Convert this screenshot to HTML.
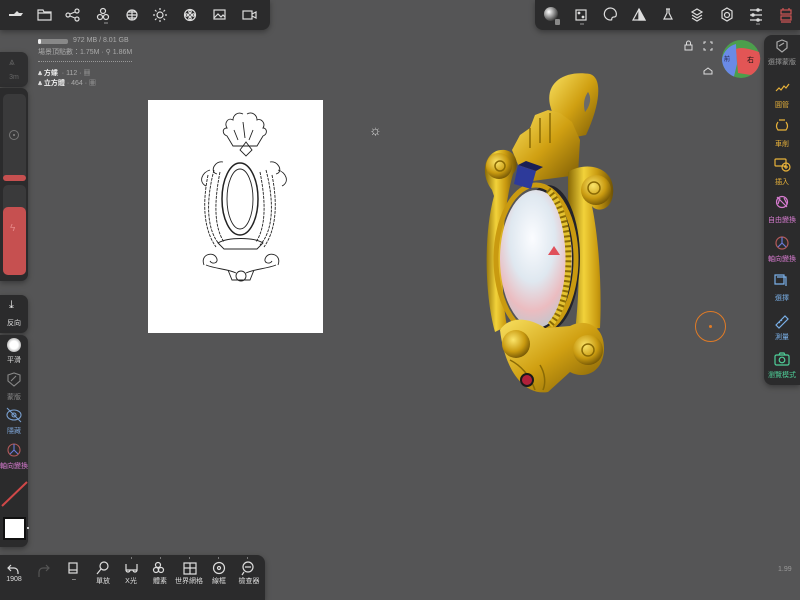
<!DOCTYPE html>
<html><head><meta charset="utf-8"><style>
*{margin:0;padding:0;box-sizing:border-box}
body{width:800px;height:600px;overflow:hidden;background:#555556;font-family:"Liberation Sans","Noto Sans CJK TC",sans-serif;position:relative;color:#ccc}
.p{position:absolute;background:#2b2b2c;box-shadow:0 2px 6px rgba(0,0,0,.35)}
.lbl{position:absolute;font-size:7px;transform:translateX(-50%);white-space:nowrap}
svg{overflow:visible}
</style></head><body>

<!-- top-left toolbar -->
<div class="p" style="left:0;top:0;width:270px;height:30px;border-radius:0 0 8px 0"></div>
<svg style="position:absolute;left:0;top:0" width="270" height="30" fill="none" stroke="#ddd" stroke-width="1.2">
<path d="M9 16h12l2-3h-4l-2-2-3 3h-5z" fill="#ddd" stroke="none"/>
<path d="M38 10h5l1 2h7v8H38z"/><path d="M38 13h13"/>
<circle cx="68" cy="15" r="2"/><circle cx="77" cy="11" r="2"/><circle cx="77" cy="19" r="2"/><path d="M70 14l5-2M70 16l5 2"/>
<circle cx="103" cy="11" r="2.5"/><circle cx="100" cy="17" r="2.5"/><circle cx="106" cy="17" r="2.5"/><path d="M104 23h4" stroke="#888"/>
<circle cx="132" cy="15" r="5"/><path d="M127 15h10M132 10v10M128 12h8M128 18h8"/>
<circle cx="160" cy="15" r="3"/><path d="M160 8v2M160 20v2M153 15h2M165 15h2M155 10l1.5 1.5M165 10l-1.5 1.5M155 20l1.5-1.5M165 20l-1.5-1.5"/>
<circle cx="190" cy="15" r="5.5"/><circle cx="190" cy="15" r="1.5"/><circle cx="190" cy="11.5" r="1.2"/><circle cx="190" cy="18.5" r="1.2"/><circle cx="186.5" cy="15" r="1.2"/><circle cx="193.5" cy="15" r="1.2"/>
<rect x="214" y="10" width="11" height="9"/><path d="M214 18l4-4 3 3 2-2 2 2"/>
<rect x="243" y="11" width="9" height="8"/><path d="M252 14l4-2v6l-4-2"/>
</svg>

<!-- info text -->
<div style="position:absolute;left:38px;top:39px;width:30px;height:5px;background:#888;border-radius:2px"></div>
<div style="position:absolute;left:38px;top:39px;width:3px;height:5px;background:#eee;border-radius:2px"></div>
<div style="position:absolute;left:73px;top:37px;font-size:7px;color:#aaa">972 MB / 8.01 GB</div>
<div style="position:absolute;left:38px;top:47px;font-size:7px;color:#aaa">場景頂點數：1.75M · ⚲ 1.86M</div>
<div style="position:absolute;left:38px;top:61px;width:94px;border-top:1px dotted #999"></div>
<div style="position:absolute;left:38px;top:68px;font-size:7px;color:#ccc"><b style="color:#eee">⩓ 方蝶</b> <span style="color:#aaa">&nbsp;· 112 · ▦</span></div>
<div style="position:absolute;left:38px;top:78px;font-size:7px;color:#ccc"><b style="color:#eee">⩓ 立方體</b> <span style="color:#aaa">· 464 · ▦</span></div>

<!-- top-right toolbar -->
<div class="p" style="left:535px;top:0;width:265px;height:30px;border-radius:0 0 0 8px"></div>
<svg style="position:absolute;left:530px;top:0" width="270" height="30" fill="none" stroke="#ddd" stroke-width="1.2">
<defs><radialGradient id="sph" cx=".35" cy=".35" r=".7"><stop offset="0" stop-color="#fff"/><stop offset=".5" stop-color="#999"/><stop offset="1" stop-color="#333"/></radialGradient></defs>
<circle cx="21" cy="14" r="7" fill="url(#sph)" stroke="none"/><rect x="25" y="19" width="5" height="6" rx="1" fill="#888" stroke="none"/>
<rect x="46" y="10" width="10" height="10"/><circle cx="49" cy="13" r=".8" fill="#ddd"/><circle cx="53" cy="17" r=".8" fill="#ddd"/><path d="M50 24h4" stroke="#888"/>
<path d="M80 20a6 6 0 1 1 6-4c-1 2-3 0-4 2s1 2-2 2z"/>
<path d="M103 20l6-11 6 11z"/><path d="M109 9v11" /><path d="M109 9l6 11h-6z" fill="#ddd"/>
<path d="M136 9h4M137 9v4l-3 6h8l-3-6V9"/>
<path d="M167 9l5 3-5 3-5-3zM162 15l5 3 5-3M162 18l5 3 5-3"/>
<circle cx="197" cy="15" r="2.5"/><path d="M197 8l5 3v7l-5 3-5-3v-7z"/>
<path d="M220 10h12M220 15h12M220 20h12"/><circle cx="228" cy="10" r="1.2" fill="#ddd"/><circle cx="223" cy="15" r="1.2" fill="#ddd"/><circle cx="228" cy="20" r="1.2" fill="#ddd"/><path d="M226 24h4" stroke="#888"/>
<g stroke="#d05555"><rect x="251" y="10" width="10" height="4"/><rect x="251" y="16" width="10" height="4"/><path d="M251 22h10M253 8v2M259 8v2"/></g>
</svg>

<!-- lock / expand / home -->
<svg style="position:absolute;left:680px;top:38px" width="40" height="40" fill="none" stroke="#ddd" stroke-width="1">
<rect x="5" y="7" width="7" height="5"/><path d="M6.5 7V5a2 2 0 0 1 4 0v2"/>
<path d="M24 6V4h2M30 4h2v2M24 10v2h2M30 12h2v-2"/>
<path d="M24 33l4-3 4 3v3h-8z"/>
</svg>
<!-- gizmo cube -->
<svg style="position:absolute;left:721px;top:39px" width="40" height="40">
<circle cx="20" cy="20" r="19" fill="#4c9e4c"/>
<path d="M1 20a19 19 0 0 0 12 17.5L16 25 15 5A19 19 0 0 0 1 20z" fill="#6a8ae6"/>
<path d="M15 10q6-3 23 3a19 19 0 0 1-8 23l-13-2z" fill="#e25555"/>
<text x="26" y="23" font-size="7" fill="#111" font-family="Noto Sans CJK TC">右</text>
<text x="3" y="22" font-size="6" fill="#224">前</text>
</svg>

<!-- right panel -->
<div class="p" style="left:764px;top:35px;width:36px;height:350px;border-radius:8px 0 0 8px"></div>
<svg style="position:absolute;left:764px;top:35px" width="36" height="350" fill="none" stroke-width="1.2">
<path d="M13 7l5-2 5 2v6l-5 4-5-4z" stroke="#aaa"/><path d="M15 11l5-3" stroke="#aaa"/>
<path d="M12 56l3-3 2 2 3-4 2 2 3-4" stroke="#e8b23a"/>
<path d="M15 85h6M14 87q-3 4 0 8h8q3-4 0-8" stroke="#e8b23a"/>
<rect x="11" y="124" width="11" height="7" rx="1" stroke="#e8b23a"/><circle cx="22" cy="132" r="4" stroke="#e8b23a"/><path d="M22 130v4M20 132h4" stroke="#e8b23a"/>
<circle cx="18" cy="167" r="5.5" stroke="#d77bd0"/><path d="M13 162l10 10M16 163l-2 6M20 163l3 6" stroke="#d77bd0"/>
<circle cx="18" cy="208" r="6" stroke="#b45a5a"/><path d="M18 202v6l-4 4M18 208l4 4" stroke="#6a7ad8"/>
<path d="M11 240h9v9h-9zM13 242h9v9" stroke="#7ab0e8"/>
<path d="M12 290l9-9 3 3-9 9zM15 287l1 1M17 285l1 1" stroke="#7ab0e8"/>
<rect x="11" y="320" width="14" height="10" rx="1.5" stroke="#4fcf99"/><circle cx="18" cy="325" r="2.8" stroke="#4fcf99"/><path d="M15 320l1-2h4l1 2" stroke="#4fcf99"/>
</svg>
<div class="lbl" style="left:782px;top:57px;color:#999">選擇蒙版</div>
<div class="lbl" style="left:782px;top:100px;color:#e8b23a">圓管</div>
<div class="lbl" style="left:782px;top:139px;color:#e8b23a">車削</div>
<div class="lbl" style="left:782px;top:177px;color:#e8b23a">插入</div>
<div class="lbl" style="left:782px;top:215px;color:#d77bd0">自由變換</div>
<div class="lbl" style="left:782px;top:254px;color:#d77bd0">軸向變換</div>
<div class="lbl" style="left:782px;top:293px;color:#7ab0e8">選擇</div>
<div class="lbl" style="left:782px;top:332px;color:#7ab0e8">測量</div>
<div class="lbl" style="left:782px;top:370px;color:#4fcf99">瀏覽模式</div>

<!-- left panels -->
<div class="p" style="left:0;top:52px;width:28px;height:35px;border-radius:0 7px 7px 0;background:#2f2f30"></div>
<div style="position:absolute;left:9px;top:57px;font-size:10px;color:#666">⩓</div>
<div class="lbl" style="left:14px;top:74px;color:#666">3m</div>
<div class="p" style="left:0;top:88px;width:28px;height:193px;border-radius:0 7px 7px 0"></div>
<div style="position:absolute;left:3px;top:94px;width:23px;height:86px;background:#3a3a3b;border-radius:5px"></div>
<div style="position:absolute;left:3px;top:175px;width:23px;height:6px;background:#c65050;border-radius:3px"></div>
<div style="position:absolute;left:9px;top:130px;width:10px;height:10px;border:1px solid #777;border-radius:50%"></div>
<div style="position:absolute;left:13px;top:134px;width:2px;height:2px;background:#888;border-radius:50%"></div>
<div style="position:absolute;left:3px;top:185px;width:23px;height:90px;background:#3a3a3b;border-radius:5px"></div>
<div style="position:absolute;left:3px;top:207px;width:23px;height:68px;background:#c65050;border-radius:5px"></div>
<div style="position:absolute;left:10px;top:223px;font-size:10px;color:#e58888">ϟ</div>

<div class="p" style="left:0;top:295px;width:28px;height:38px;border-radius:0 7px 7px 0"></div>
<div style="position:absolute;left:9px;top:299px;font-size:11px;color:#eee">⤓</div>
<div class="lbl" style="left:14px;top:318px;color:#ddd">反向</div>
<div class="p" style="left:0;top:335px;width:28px;height:212px;border-radius:0 7px 7px 0"></div>
<div style="position:absolute;left:7px;top:338px;width:14px;height:14px;border-radius:50%;background:radial-gradient(#fff 40%,#bbb 70%,#777)"></div>
<div class="lbl" style="left:14px;top:355px;color:#ddd">平滑</div>
<svg style="position:absolute;left:0;top:370px" width="28" height="90" fill="none" stroke-width="1.1">
<path d="M8 5l6-2 6 2v6l-6 5-6-5z" stroke="#888"/><path d="M11 11l5-5" stroke="#888"/>
<ellipse cx="14" cy="45" rx="7" ry="5" stroke="#7aa0d0"/><circle cx="14" cy="45" r="2" stroke="#7aa0d0"/><path d="M7 38l14 14" stroke="#7aa0d0"/>
<circle cx="14" cy="80" r="6" stroke="#b45a5a"/><path d="M14 74v6l-4 4M14 80l4 4" stroke="#6a7ad8"/>
</svg>
<div class="lbl" style="left:14px;top:392px;color:#888">蒙版</div>
<div class="lbl" style="left:14px;top:426px;color:#7aa0d0">隱藏</div>
<div class="lbl" style="left:14px;top:461px;color:#d77bd0">軸向變換</div>
<svg style="position:absolute;left:0;top:478px" width="30" height="30"><path d="M2 28L27 4" stroke="#d04848" stroke-width="2"/></svg>
<div style="position:absolute;left:3px;top:517px;width:23px;height:23px;background:#fff;border:2px solid #111"></div>
<div style="position:absolute;left:27px;top:527px;width:2px;height:2px;background:#ccc"></div>

<!-- bottom bar -->
<div class="p" style="left:0;top:555px;width:265px;height:45px;border-radius:0 8px 0 0"></div>
<svg style="position:absolute;left:0;top:555px" width="265" height="45" fill="none" stroke="#ddd" stroke-width="1.2">
<path d="M11 10l-3 3 3 3M8 13h6a4 4 0 0 1 4 4v2"/>
<path d="M46 10l3 3-3 3M49 13h-6a4 4 0 0 0-4 4v5" stroke="#555"/>
<rect x="69" y="8" width="8" height="10"/><path d="M69 15h8" />
<circle cx="104" cy="11" r="4"/><path d="M101 14l-4 5"/>
<path d="M126 9v6h11V9M126 15a2 2 0 0 0 4 0M133 15a2 2 0 0 0 4 0"/>
<circle cx="158" cy="10" r="2.5"/><circle cx="156" cy="15" r="2.5"/><circle cx="161" cy="15" r="2.5"/>
<path d="M184 8h12v11h-12zM184 13h12M190 8v11"/>
<circle cx="219" cy="13" r="5.5"/><circle cx="219" cy="13" r="1.5"/>
<circle cx="248" cy="12" r="5"/><path d="M245 12h6M244 17l-2 3"/>
<g stroke="#aaa"><path d="M131 3h1M160 3h1M189 3h1M218 3h1M247 3h1"/></g>
</svg>
<div class="lbl" style="left:14px;top:576px;color:#ddd">1908</div>
<div class="lbl" style="left:74px;top:576px;color:#ddd">–</div>
<div class="lbl" style="left:103px;top:576px;color:#ddd">單放</div>
<div class="lbl" style="left:131px;top:576px;color:#ddd">X光</div>
<div class="lbl" style="left:160px;top:576px;color:#ddd">體素</div>
<div class="lbl" style="left:189px;top:576px;color:#ddd">世界網格</div>
<div class="lbl" style="left:219px;top:576px;color:#ddd">線框</div>
<div class="lbl" style="left:249px;top:576px;color:#ddd">檢查器</div>
<div style="position:absolute;left:778px;top:566px;font-size:7px;color:#999">1.99</div>

<!-- reference image -->
<div style="position:absolute;left:148px;top:100px;width:175px;height:233px;background:#fff"></div>
<svg style="position:absolute;left:148px;top:100px" width="175" height="233" fill="none" stroke="#222" stroke-width="0.9">
<path d="M95 14c-6-3-10 2-10 6-5-3-9 3-6 8-5 0-5 6 0 8l6 10h24l6-10c5-2 4-8 0-8 3-5-2-10-6-8 0-5-5-9-10-6"/>
<path d="M86 30l4 10M95 22l2 16M105 30l-4 10M92 50l6-8 6 8-6 6z"/>
<path d="M75 62c-8-2-14 10-6 12M122 62c8-2 14 10 6 12M62 70c-8 2-12 12-4 16M130 70c8 2 12 12 4 16"/>
<ellipse cx="92" cy="99" rx="18" ry="36" stroke-width="1.5"/><ellipse cx="92" cy="99" rx="13" ry="30"/>
<path d="M66 70c-8 30-8 60 6 75M60 75c-6 30-4 55 8 72M118 70c8 30 8 60-6 75M124 75c6 30 4 55-8 72M72 72c-6 30-6 55 4 70M112 72c6 30 6 55-4 70" stroke-dasharray="3 1"/>
<path d="M70 143c10-6 36-6 45 0l-6 6h-33z"/>
<path d="M56 165c-4-10 8-14 12-8s-4 8-6 4M130 165c4-10-8-14-12-8s4 8 6 4"/>
<path d="M58 165c10 4 22 4 30 8M128 165c-10 4-22 4-30 8M80 170l4 10h18l4-10"/>
<circle cx="93" cy="176" r="5"/>
</svg>

<!-- light icon -->
<div style="position:absolute;left:369px;top:122px;font-size:14px;color:#ddd">☼</div>
<!-- orange circle -->
<div style="position:absolute;left:695px;top:311px;width:31px;height:31px;border:1.5px solid #e07b26;border-radius:50%"></div>
<div style="position:absolute;left:709px;top:325px;width:3px;height:3px;background:#e07b26;border-radius:50%"></div>

<!-- pendant -->
<svg style="position:absolute;left:470px;top:60px" width="170" height="340" viewBox="470 60 170 340">
<defs>
<linearGradient id="g" x1="0" y1="0" x2="1" y2="0"><stop offset="0" stop-color="#8a6a05"/><stop offset=".35" stop-color="#f2d23a"/><stop offset=".65" stop-color="#c99a10"/><stop offset="1" stop-color="#6e5205"/></linearGradient>
<linearGradient id="g2" x1="0" y1="0" x2="1" y2="1"><stop offset="0" stop-color="#f8e060"/><stop offset=".5" stop-color="#d0a012"/><stop offset="1" stop-color="#7a5a05"/></linearGradient>
<radialGradient id="sc" cx=".4" cy=".35" r=".7"><stop offset="0" stop-color="#fbe56a"/><stop offset=".6" stop-color="#c99a10"/><stop offset="1" stop-color="#6e5205"/></radialGradient>
<radialGradient id="op" cx=".45" cy=".35" r=".7"><stop offset="0" stop-color="#fbfcff"/><stop offset=".45" stop-color="#dfe8f0"/><stop offset=".75" stop-color="#ebbcc0"/><stop offset="1" stop-color="#b9c8d0"/></radialGradient>
</defs>
<!-- bail -->
<path d="M550 105C545 82 565 70 590 74C603 78 600 105 586 135L560 140Z" fill="url(#g2)"/>
<path d="M588 92c4 6 2 14-3 20-2-8-1-14 3-20z" fill="#6a6a6a"/>
<!-- crown -->
<path d="M512 150L520 135 530 128 535 115 548 110 560 113 572 122 580 140 578 175 525 182Z" fill="url(#g2)"/>
<path d="M530 128v20M540 118v25M550 113v30" stroke="#8a6a05" stroke-width="1.5"/>
<!-- right band -->
<path d="M568 172C588 160 616 168 613 194C611 212 596 212 592 206C599 240 602 290 600 328L575 332C581 280 580 230 568 200Z" fill="url(#g)"/>
<circle cx="596" cy="190" r="15" fill="url(#sc)"/><circle cx="594" cy="188" r="6" fill="none" stroke="#8a6a05" stroke-width="1.5"/>
<!-- left band -->
<path d="M492 190C478 172 486 148 505 150C517 152 520 166 513 174C500 220 500 290 507 326L495 332C484 292 484 232 494 196Z" fill="url(#g)"/>
<circle cx="499" cy="166" r="13" fill="url(#sc)"/><circle cx="500" cy="166" r="5" fill="none" stroke="#8a6a05" stroke-width="1.5"/>
<!-- backing -->
<ellipse cx="548" cy="258" rx="32" ry="73" fill="#23232a"/>
<ellipse cx="536" cy="259" rx="40" ry="74" fill="none" stroke="#c99a10" stroke-width="5"/>
<ellipse cx="536" cy="259" rx="36" ry="69" fill="url(#op)"/>
<path d="M548 190C575 215 575 300 550 325" stroke="#e4c230" stroke-width="6" fill="none"/>
<path d="M548 190C575 215 575 300 550 325" stroke="#8a6a05" stroke-width="6" stroke-dasharray="2 3" fill="none"/>
<path d="M548 255l6-9 6 9z" fill="#e0505a"/>
<!-- sapphire -->
<path d="M518 165l18 6-5 18-17-5z" fill="#2d3a9a"/><path d="M518 165l18 6 7-4-17-6z" fill="#1a1f55"/>
<!-- bottom -->
<path d="M500 330C510 315 530 318 545 328L570 326C585 318 605 325 604 350C603 372 585 380 570 372L548 392C525 396 505 372 500 330Z" fill="url(#g2)"/>
<circle cx="516" cy="344" r="14" fill="url(#sc)"/><circle cx="588" cy="350" r="15" fill="url(#sc)"/>
<circle cx="588" cy="350" r="6" fill="none" stroke="#8a6a05" stroke-width="1.5"/>
<path d="M510 360c10 5 20 15 25 30M540 365c5 8 6 18 3 25" stroke="#8a6a05" stroke-width="1.5" fill="none"/>
<circle cx="527" cy="380" r="6" fill="#b0203a" stroke="#1a1a1a" stroke-width="2"/>
</svg>
</body></html>
